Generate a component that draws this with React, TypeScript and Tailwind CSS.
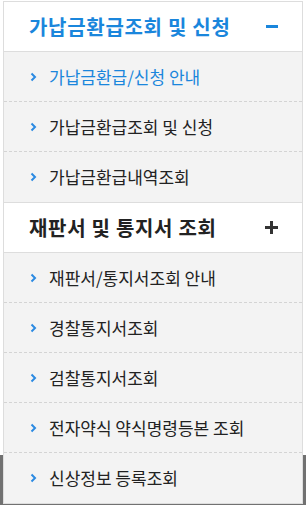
import React from 'react';

const groups = [
  {
    title: '가납금환급조회 및 신청',
    open: true,
    items: ['가납금환급/신청 안내', '가납금환급조회 및 신청', '가납금환급내역조회'],
  },
  {
    title: '재판서 및 통지서 조회',
    open: false,
    items: [
      '재판서/통지서조회 안내',
      '경찰통지서조회',
      '검찰통지서조회',
      '전자약식 약식명령등본 조회',
      '신상정보 등록조회',
    ],
  },
];

function Chevron() {
  return (
    <svg width="7" height="10" viewBox="0 0 7 10" className="shrink-0">
      <path d="M1.5 1.5 L5 5 L1.5 8.5" fill="none" stroke="#2b8ae2" strokeWidth="2" />
    </svg>
  );
}

export default function App() {
  return (
    <div
      className="min-h-[505px] pt-px bg-[linear-gradient(to_bottom,#ffffff_455px,#717171_455px)]"
      style={{ fontFamily: '"Noto Sans CJK KR", "Noto Sans", sans-serif' }}
    >
      <div className="ml-[3px] w-[300px] border border-[#dddddd] bg-white">
        {groups.map((g, gi) => (
          <div key={gi} className={gi > 0 ? 'border-t border-[#dddddd]' : ''}>
            <div className="flex h-[50px] items-center justify-between border-b border-[#dddddd] bg-white pl-[25px] pr-[24px]">
              <span
                className={`text-[20px] font-bold tracking-[0.7px] ${
                  g.open ? 'text-[#1a86dc]' : 'text-[#222222]'
                }`}
              >
                {g.title}
              </span>
              {g.open ? (
                <span className="block h-[3px] w-[12px] bg-[#1a86dc]" />
              ) : (
                <span className="relative block h-[13px] w-[13px]">
                  <span className="absolute left-0 top-[5px] h-[3px] w-[13px] bg-[#333333]" />
                  <span className="absolute left-[5px] top-0 h-[13px] w-[3px] bg-[#333333]" />
                </span>
              )}
            </div>
            <ul className="bg-[#f3f3f3]">
              {g.items.map((it, i) => (
                <li
                  key={i}
                  className={`flex h-[50px] items-center gap-[12px] pl-[26px] ${
                    i < g.items.length - 1 ? 'border-b border-dashed border-[#d4d4d4]' : ''
                  }`}
                >
                  <Chevron />
                  <span
                    className={`text-[17px] tracking-[0px] ${
                      g.open && i === 0 ? 'text-[#1a86dc]' : 'text-[#222222]'
                    }`}
                  >
                    {it}
                  </span>
                </li>
              ))}
            </ul>
          </div>
        ))}
      </div>
    </div>
  );
}
